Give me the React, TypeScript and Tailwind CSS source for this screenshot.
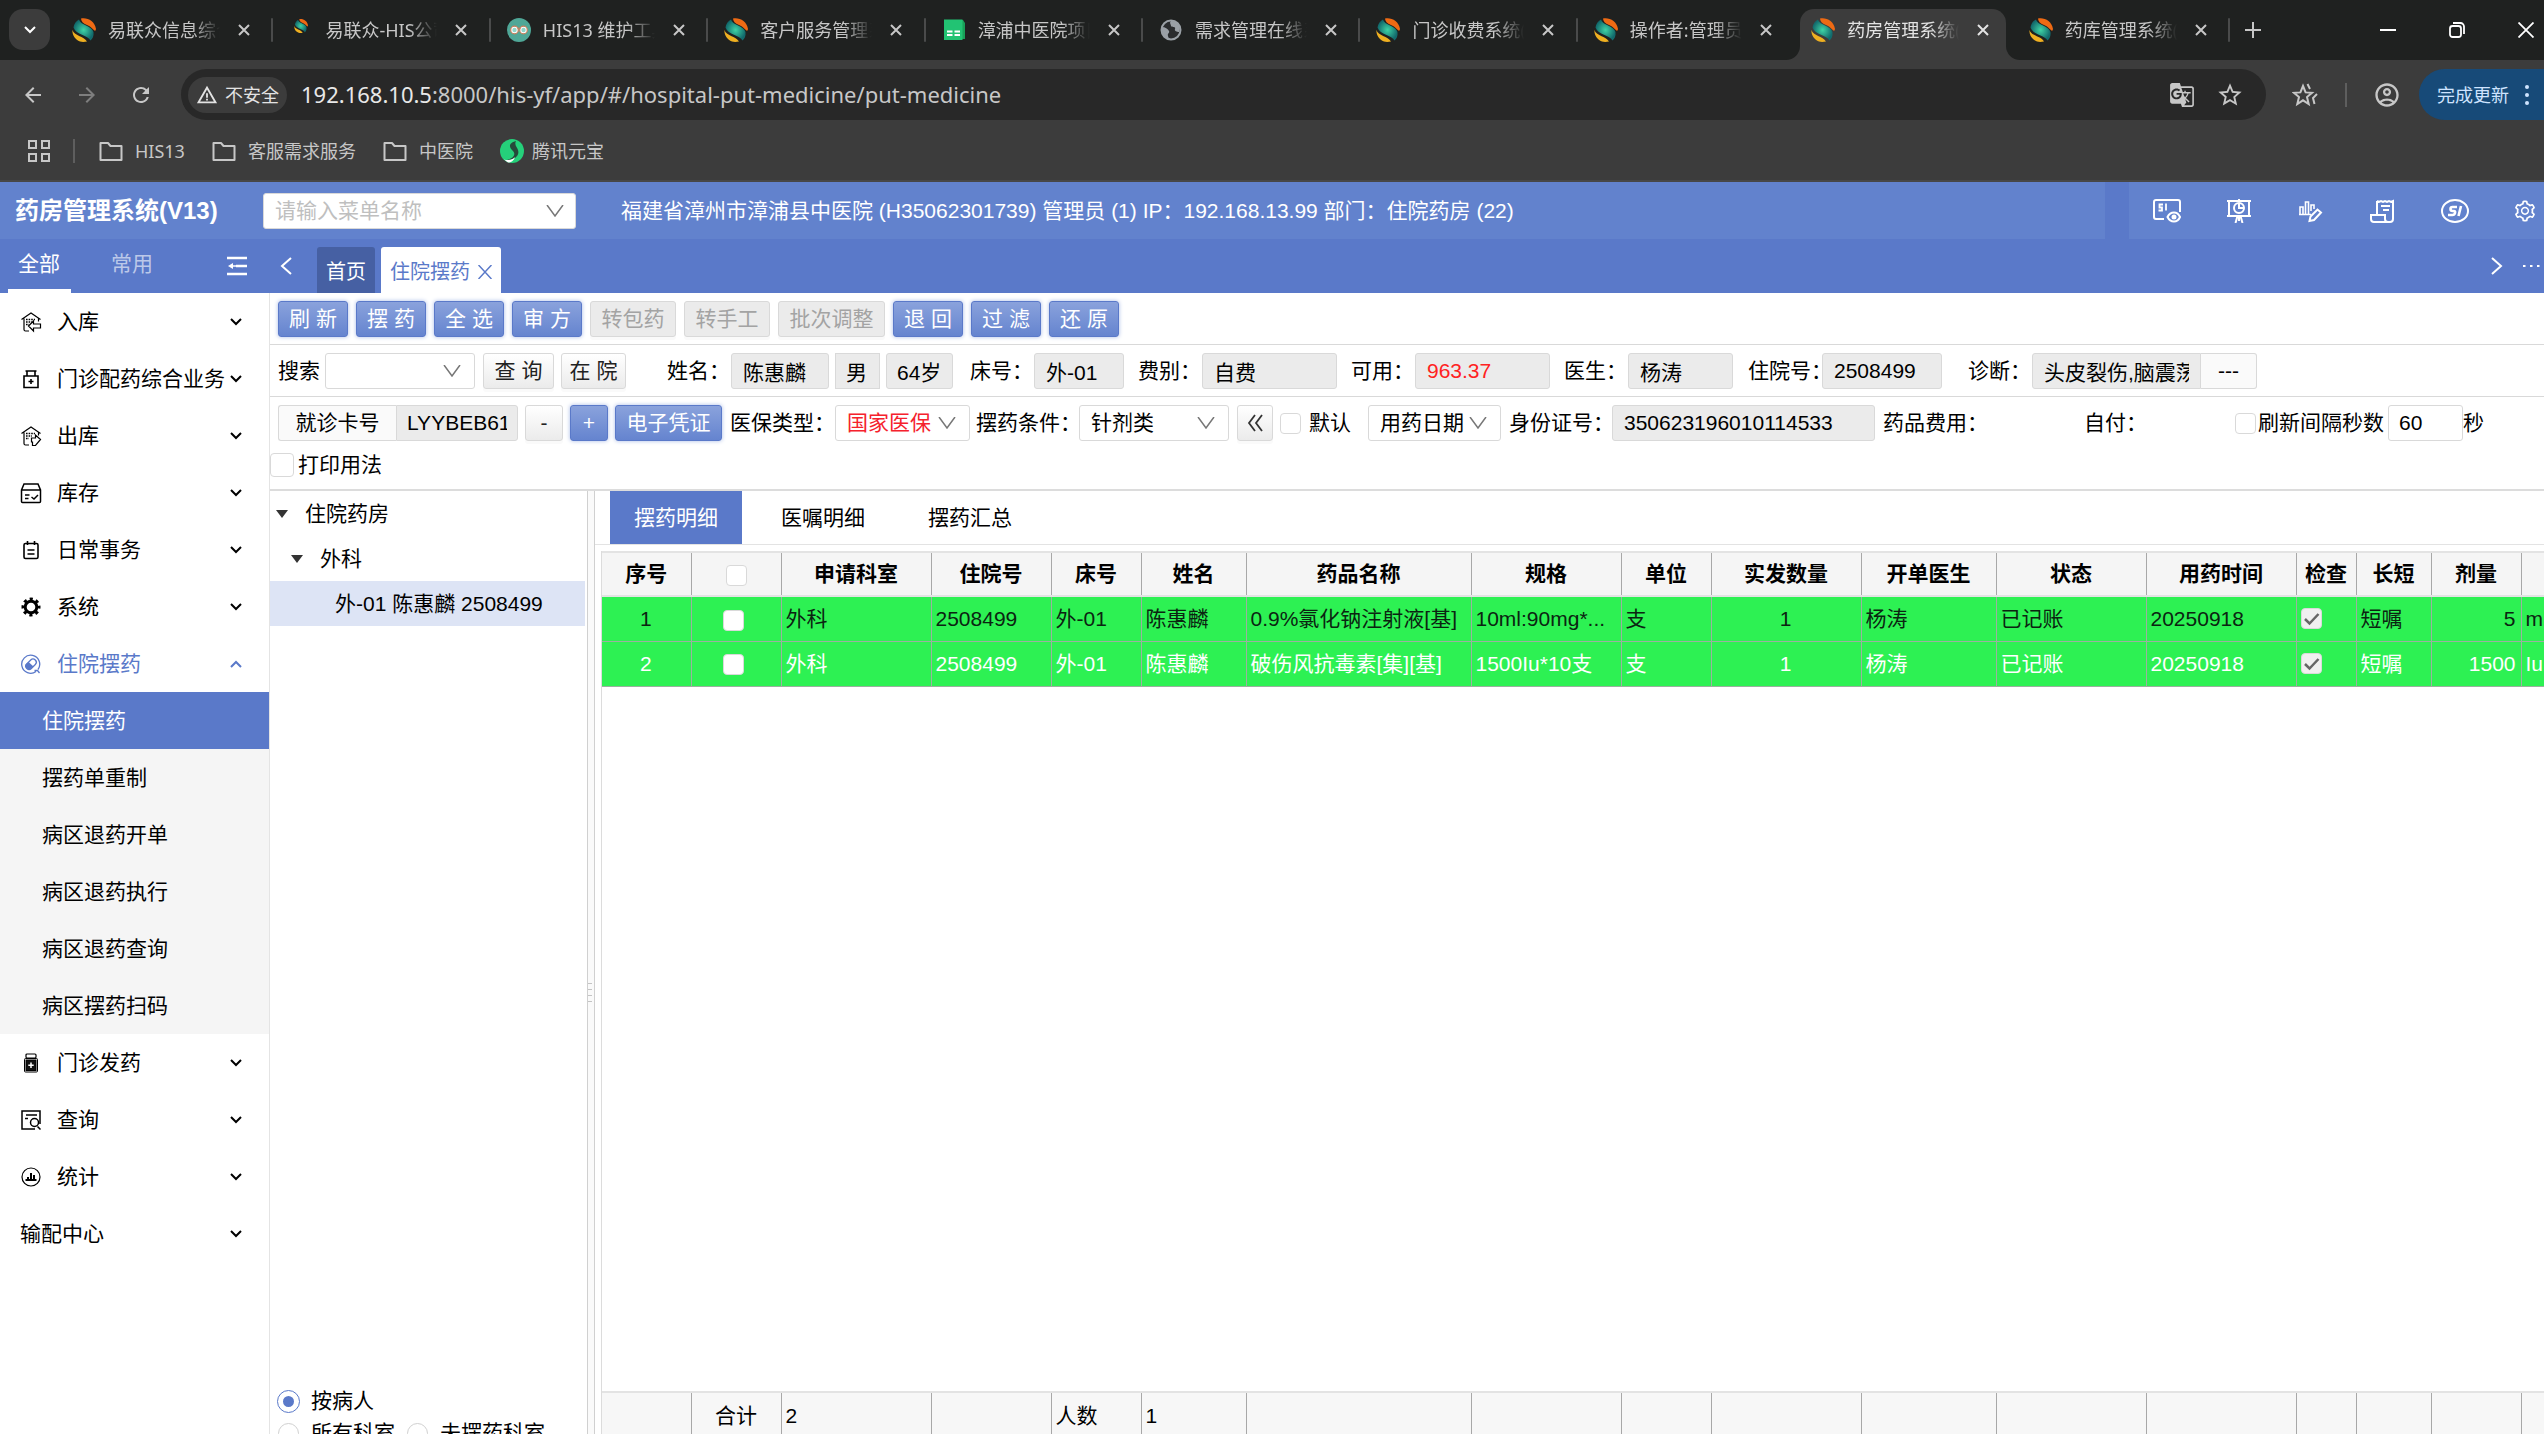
import { useState } from 'react';
import type { ReactNode } from 'react';
import { clsx } from 'clsx';
import { AiOutlineSetting } from 'react-icons/ai';
import {
  MdArrowBack,
  MdArrowForward,
  MdGTranslate,
  MdOutlineAccountCircle,
  MdRefresh,
  MdStarBorder,
  MdWarningAmber,
} from 'react-icons/md';

type IconProps = { className?: string };

/* ---------- 浏览器图标 ---------- */

const SwirlIcon = ({ className }: IconProps) => (
  <svg viewBox="0 0 24 24" className={clsx('shrink-0', className)}>
    <defs>
      <radialGradient id="teal">
        <stop offset="0" stopColor="#3fd3a5" />
        <stop offset="1" stopColor="#126a6c" />
      </radialGradient>
    </defs>
    <path d="M9 0.5C15-1 23 3 24 11C23 16 21 9 15 7C11 5.500 9 3 9 0.500Z" fill="#ee6a14" />
    <path d="M7 1.500C8 7 20 8 21.500 14C22 18 20.500 21 18.500 22.500C16 17 4 17 1.500 9.500C2 6 4 3 7 1.500Z" fill="url(#teal)" />
    <path d="M0.500 12C2 18 12 18 15 23.500C13 24 10 24.200 8 23.500C3 21.500 0 17 0.500 12Z" fill="#efb021" />
  </svg>
);

const GlassesIcon = () => (
  <svg viewBox="0 0 24 24" className="size-6 shrink-0">
    <circle cx="12" cy="12" r="12" fill="#4fa797" />
    <circle cx="7.500" cy="12" r="3.800" fill="#fff" stroke="#c77f5c" strokeWidth="1.200" />
    <circle cx="16.500" cy="12" r="3.800" fill="#fff" stroke="#c77f5c" strokeWidth="1.200" />
    <circle cx="7.500" cy="12" r="2.200" fill="#8fd6cb" />
    <circle cx="16.500" cy="12" r="2.200" fill="#8fd6cb" />
    <path d="M10.500 10.500Q12 9.500 13.500 10.500" stroke="#c77f5c" strokeWidth="1.200" fill="none" />
  </svg>
);

const SheetIcon = () => (
  <svg viewBox="0 0 24 24" className="size-6 shrink-0">
    <path d="M2 2h19l2 3v16H2Z" fill="#18a058" />
    <path d="M2 1.500h18.500V22H2Z" fill="#22c373" />
    <path d="M5 12.500h5.500v2H5zM12.500 12.500H18v2h-5.500zM5 16h5.500v2H5zM12.500 16H18v2h-5.500z" fill="#fff" />
  </svg>
);

const GlobeIcon = () => (
  <svg viewBox="0 0 24 24" className="size-6 shrink-0">
    <circle cx="12" cy="12" r="9.500" fill="#2a2c2e" stroke="#9aa0a6" strokeWidth="2" />
    <path d="M3 9C6 9 9 11 10 13C11 15 8 15 9 18C9 20 11 21 12 21C7 22 2 17 3 9ZM12 3C10 5 12 6 12 8C13 10 17 8 16 11C15 13 18 14 20 14C23 8 18 2 12 3Z" fill="#9aa0a6" />
  </svg>
);

const FolderIcon = () => (
  <svg viewBox="0 0 24 24" className="size-6" fill="none" stroke="#c7c7c7" strokeWidth="2" strokeLinejoin="round">
    <path d="M1.500 4h7.500l2.500 3H22.500v14H1.500Z" />
  </svg>
);

const CloseIcon = ({ className }: IconProps) => (
  <svg viewBox="0 0 12 12" className={clsx('size-3', className)} stroke="currentColor" strokeWidth="2" fill="none">
    <path d="M1 1l10 10M11 1L1 11" />
  </svg>
);

const Chevron = ({ className }: IconProps) => (
  <svg viewBox="0 0 12 8" className={clsx('h-2 w-3 shrink-0', className)} stroke="currentColor" strokeWidth="2" fill="none">
    <path d="M1 1l5 5l5-5" />
  </svg>
);

const StarListIcon = () => (
  <svg viewBox="0 0 26 24" className="h-6 w-[26px]" fill="none" stroke="#c7c7c7" strokeWidth="2">
    <path d="M11 3l2.600 6.400l6.400 0.400l-5 4.300l1.700 6.900L11 17.300L5.300 21L7 14.100L2 9.800l6.400-0.400Z" />
    <path d="M15.500 1l2.500 5M25 11l-4 4l1.500 6" />
  </svg>
);

/* ---------- 顶栏图标 ---------- */

const HeaderSvg = ({ children }: { children: ReactNode }) => (
  <svg viewBox="0 0 28 24" className="h-6 w-7" fill="none" stroke="#fff" strokeWidth="2">
    {children}
  </svg>
);

const headerIcons = [
  {
    name: '医保查看',
    icon: (
      <HeaderSvg>
        <path d="M11 20H3a2 2 0 0 1-2-2V3a2 2 0 0 1 2-2h22a2 2 0 0 1 2 2v10" />
        <path d="M10 5.500H6.500v3H9v3H5.500M13 4.500v7" strokeWidth="1.800" />
        <path d="M14.500 18c3-6 10-6 12.500 0c-2.500 6-9.500 6-12.500 0Z" />
        <circle cx="21" cy="18" r="1.500" fill="#fff" />
      </HeaderSvg>
    ),
  },
  {
    name: '看板',
    icon: (
      <HeaderSvg>
        <path d="M2 2h24M4 2v14M24 2v14M2 17h24M14 0v3M12.500 17L10.500 24M15.500 17l2 7M14 17v5" />
        <circle cx="14" cy="9" r="5" />
        <path d="M14 5v4h4" />
      </HeaderSvg>
    ),
  },
  {
    name: '报表',
    icon: (
      <HeaderSvg>
        <path d="M3 15V8h3v7M8.500 15V3h3v12M14 12V6h3v4M2 15.500h12" strokeWidth="1.600" />
        <path d="M12.500 22l1-4.500l7-7l3.500 3l-7 7.500Z" />
      </HeaderSvg>
    ),
  },
  {
    name: '单据',
    icon: (
      <HeaderSvg>
        <path d="M8 16V2M8 2l2 1l2-1l2 1l2-1l2 1l2-1l2 1l2-1v18a3 3 0 0 1-3 3H5a3 3 0 0 1-3-3v-4h14v4a3 3 0 0 0 3 3M12 7h9M14 11h6" />
      </HeaderSvg>
    ),
  },
  {
    name: '医保',
    icon: (
      <HeaderSvg>
        <ellipse cx="14" cy="12" rx="13" ry="11" />
        <path d="M16 8h-4.500q-2 0-2 2t2 2h1.500q1.500 0 1 2t-2.500 2H7M20 7l-2.500 10" strokeWidth="2.600" />
      </HeaderSvg>
    ),
  },
  { name: '设置', icon: <AiOutlineSetting className="size-6" /> },
];

/* ---------- 菜单图标 ---------- */

const MenuSvg = ({ children }: { children: ReactNode }) => (
  <svg viewBox="0 0 22 22" className="size-[22px] shrink-0" fill="none" stroke="currentColor" strokeWidth="1.500">
    {children}
  </svg>
);

const Warehouse = ({ arrow }: { arrow: string }) => (
  <MenuSvg>
    <path d="M1.500 8.500L11 2l9.500 6.500M4 7.500v11q0 1.500 1.500 1.500H9M18.500 7.500v3" strokeWidth="1.200" />
    <path d="M6 8.500h9M6 11h6M6 13.500h3" strokeWidth="1.500" strokeDasharray="1.600 1" />
    <path d={arrow} strokeWidth="1.200" />
  </MenuSvg>
);

const menuIcons: Record<string, ReactNode> = {
  in: <Warehouse arrow="M8.500 15l5-5v3h7v4h-7v3Z" />,
  out: <Warehouse arrow="M20.500 14.500l-5-4.500v3h-4v4h1v3.500h3Z" />,
  bottle: (
    <MenuSvg>
      <path d="M4 8h14v11.500H4ZM7 8V3.500M15 8V3.500M5.500 3h11M11 11v5M8.500 13.500h5" strokeWidth="1.600" />
    </MenuSvg>
  ),
  stock: (
    <MenuSvg>
      <path d="M1.500 8L4 2h14l2.500 6v11.500q0 1-1 1h-17q-1 0-1-1ZM1.500 8h19M5 13h4.500M5 16.500h3.500M11.500 15l2.500 2l4-4" />
    </MenuSvg>
  ),
  daily: (
    <MenuSvg>
      <rect x="4" y="4.500" width="14" height="15" rx="1.500" strokeWidth="1.600" />
      <path d="M7.500 2v4M14.500 2v4M7.500 11h7M7.500 15h7" strokeWidth="1.600" />
    </MenuSvg>
  ),
  gear: (
    <MenuSvg>
      <circle cx="11" cy="11" r="5.800" strokeWidth="3" />
      <circle cx="11" cy="11" r="8" strokeWidth="3" strokeDasharray="3.140 3.140" strokeDashoffset="1.570" />
    </MenuSvg>
  ),
  pill: (
    <MenuSvg>
      <path d="M16 18.500a9 9 0 1 1 2-2M14.500 17.500h3l2 2.500" strokeWidth="1.300" />
      <rect x="5" y="8" width="12" height="6.500" rx="3.200" transform="rotate(-45 11 11.200)" strokeWidth="1.300" />
      <path d="M8.500 9l5 4.500l-3 2.500q-3 1-4.500-1.500t0.500-4Z" fill="currentColor" strokeWidth="0" />
    </MenuSvg>
  ),
  bottleSolid: (
    <MenuSvg>
      <rect x="6" y="2" width="10" height="4" rx="1" strokeWidth="1.200" />
      <rect x="4.500" y="6.500" width="13" height="13.500" rx="1" strokeWidth="1" />
      <rect x="6" y="8" width="10" height="10.500" fill="#111" strokeWidth="1" />
      <path d="M11 10.500v5.500M8.300 13.200h5.400" stroke="#fff" />
    </MenuSvg>
  ),
  query: (
    <MenuSvg>
      <path d="M15 20H2V2h18v13M6 6h11M5 9.500h3M17.500 17.500l3 3" />
      <circle cx="14.500" cy="13.500" r="4" />
    </MenuSvg>
  ),
  stat: (
    <MenuSvg>
      <circle cx="11" cy="11" r="9" strokeWidth="1.200" />
      <path d="M5.500 14h11M8 14v-3M11 14V7M14 14V9" strokeWidth="2" />
    </MenuSvg>
  ),
};

/* ---------- 数据 ---------- */

const tabs: { title: string; icon: ReactNode; active?: boolean }[] = [
  { title: '易联众信息综合', icon: <SwirlIcon className="size-6" /> },
  { title: '易联众-HIS公司', icon: <SwirlIcon className="size-3.5 mx-[5px] mb-2" /> },
  { title: 'HIS13 维护工具', icon: <GlassesIcon /> },
  { title: '客户服务管理系', icon: <SwirlIcon className="size-6" /> },
  { title: '漳浦中医院项目', icon: <SheetIcon /> },
  { title: '需求管理在线系', icon: <GlobeIcon /> },
  { title: '门诊收费系统(', icon: <SwirlIcon className="size-6" /> },
  { title: '操作者:管理员', icon: <SwirlIcon className="size-6" /> },
  { title: '药房管理系统(', icon: <SwirlIcon className="size-6" />, active: true },
  { title: '药库管理系统(', icon: <SwirlIcon className="size-6" /> },
];

const menu: { label: string; icon?: string; children?: string[] }[] = [
  { label: '入库', icon: 'in' },
  { label: '门诊配药综合业务', icon: 'bottle' },
  { label: '出库', icon: 'out' },
  { label: '库存', icon: 'stock' },
  { label: '日常事务', icon: 'daily' },
  { label: '系统', icon: 'gear' },
  {
    label: '住院摆药',
    icon: 'pill',
    children: ['住院摆药', '摆药单重制', '病区退药开单', '病区退药执行', '病区退药查询', '病区摆药扫码'],
  },
  { label: '门诊发药', icon: 'bottleSolid' },
  { label: '查询', icon: 'query' },
  { label: '统计', icon: 'stat' },
  { label: '输配中心' },
];

const columns = [
  { title: '序号', width: 'w-[89px]' },
  { title: '', width: 'w-[90px]' },
  { title: '申请科室', width: 'w-[150px]' },
  { title: '住院号', width: 'w-[120px]' },
  { title: '床号', width: 'w-[90px]' },
  { title: '姓名', width: 'w-[105px]' },
  { title: '药品名称', width: 'w-[225px]' },
  { title: '规格', width: 'w-[150px]' },
  { title: '单位', width: 'w-[90px]' },
  { title: '实发数量', width: 'w-[150px]' },
  { title: '开单医生', width: 'w-[135px]' },
  { title: '状态', width: 'w-[150px]' },
  { title: '用药时间', width: 'w-[150px]' },
  { title: '检查', width: 'w-[60px]' },
  { title: '长短', width: 'w-[75px]' },
  { title: '剂量', width: 'w-[90px]' },
  { title: '', width: 'w-[150px]' },
];

const rows = [
  { no: 1, drug: '0.9%氯化钠注射液[基]', spec: '10ml:90mg*...', dose: '5', unit: 'ml', color: 'text-[#0b2411]' },
  { no: 2, drug: '破伤风抗毒素[集][基]', spec: '1500Iu*10支', dose: '1500', unit: 'Iu', color: 'text-white' },
];

/* ---------- 基础控件 ---------- */

const checkboxCls = 'size-[21px] shrink-0 appearance-none rounded border border-[#d9d9d9] bg-white';

type ButtonProps = { children: ReactNode; kind?: 'primary' | 'default' | 'disabled'; className?: string };

function Button({ children, kind = 'default', className }: ButtonProps) {
  return (
    <button
      type="button"
      disabled={kind === 'disabled'}
      className={clsx(
        'flex h-9 shrink-0 items-center justify-center whitespace-nowrap rounded-[3px] border',
        kind === 'primary' && 'border-[#5a79c9] bg-linear-to-b from-[#8aa2dc] to-[#6584cf] text-white shadow-[0_0_4px_#a9bbe6]',
        kind === 'default' && 'border-[#d9d9d9] bg-linear-to-b from-white to-[#ebebeb] text-[#222] shadow-[0_3px_0_#fafafa]',
        kind === 'disabled' && 'border-[#d9d9d9] bg-[#ebebeb] text-[#a3a3a3] shadow-[0_3px_0_#fafafa]',
        className
      )}
    >
      {children}
    </button>
  );
}

function Field({ label, value, labelCls, className }: { label: string; value: string; labelCls?: string; className?: string }) {
  return (
    <>
      <label htmlFor={label} className={clsx('shrink-0 whitespace-nowrap', labelCls)}>{label}：</label>
      <input
        id={label}
        readOnly
        defaultValue={value}
        className={clsx('h-9 shrink-0 rounded-[3px] border border-[#d9d9d9] bg-[#ebebeb] px-[11px]', className)}
      />
    </>
  );
}

type PickerProps = { id: string; value: string; className?: string; textCls?: string; arrowCls?: string };

function Picker({ id, value, className, textCls, arrowCls = 'right-4' }: PickerProps) {
  return (
    <span className={clsx('relative flex h-9 shrink-0', className)}>
      <select
        id={id}
        aria-label={id}
        className={clsx('h-full w-full appearance-none rounded-[3px] border border-[#d9d9d9] bg-white px-[11px]', textCls)}
      >
        <option>{value}</option>
      </select>
      <svg
        viewBox="0 0 18 12"
        className={clsx('pointer-events-none absolute top-3 h-3 w-[18px]', arrowCls)}
        fill="none"
        stroke="#777"
        strokeWidth="1.500"
      >
        <path d="M1 0l8 11l8-11" />
      </svg>
    </span>
  );
}

/* ---------- 页面区块 ---------- */

function BrowserChrome() {
  return (
    <div className="shrink-0 border-b-2 border-[#474747] bg-[#3c3c3c] font-['Noto_Sans','Noto_Sans_CJK_SC',sans-serif] text-lg text-[#c7c7c7]">
      {/* 标签栏 */}
      <div className="flex h-[60px] bg-[#1f2120]">
        <div className="w-14 shrink-0 pl-[9px] pt-[9px]">
          <button type="button" aria-label="搜索标签页" className="flex size-[41px] items-center justify-center rounded-[14px] bg-[#3c3c3c] text-white">
            <Chevron />
          </button>
        </div>
        <div className="flex min-w-0 flex-1">
          {tabs.map((tab, i) => {
            const noDivider = tab.active || tabs[i + 1]?.active;
            return (
              <div key={tab.title} className="flex min-w-0 flex-1 items-end">
                <div
                  className={clsx(
                    'relative mx-[5px] flex h-[51px] min-w-0 flex-1 items-center rounded-t-[14px] pb-[9px] pl-[11px]',
                    tab.active && 'bg-[#3c3c3c] text-[#e3e3e3]'
                  )}
                >
                  {tab.active && (
                    <>
                      <span className="absolute bottom-0 -left-3.5 size-3.5 overflow-hidden">
                        <span className="block size-full rounded-br-[14px] shadow-[5px_5px_0_5px_#3c3c3c]" />
                      </span>
                      <span className="absolute bottom-0 -right-3.5 size-3.5 overflow-hidden">
                        <span className="block size-full rounded-bl-[14px] shadow-[-5px_5px_0_5px_#3c3c3c]" />
                      </span>
                    </>
                  )}
                  {tab.icon}
                  <span className="ml-3 w-28 overflow-hidden whitespace-nowrap [mask-image:linear-gradient(to_right,black_75%,transparent)]">
                    {tab.title}
                  </span>
                  <button type="button" aria-label="关闭标签页" className="ml-[18px]">
                    <CloseIcon />
                  </button>
                </div>
                <span className={clsx('mb-[18px] h-6 w-0.5 shrink-0 rounded', noDivider ? 'bg-transparent' : 'bg-[#4a4b4b]')} />
              </div>
            );
          })}
        </div>
        <div className="flex w-[314px] shrink-0 items-center pl-[15px]">
          <button type="button" aria-label="新标签页">
            <svg viewBox="0 0 16 16" className="size-4" stroke="currentColor" strokeWidth="2">
              <path d="M8 0v16M0 8h16" />
            </svg>
          </button>
          <div className="ml-auto flex items-center gap-[53px] pr-2.5 text-white">
            <svg viewBox="0 0 16 16" className="size-4" stroke="currentColor" strokeWidth="2">
              <path d="M0 8h16" />
            </svg>
            <svg viewBox="0 0 16 16" className="size-4" stroke="currentColor" strokeWidth="1.800" fill="none">
              <rect x="1" y="4" width="11" height="11" rx="2.500" />
              <path d="M4 1h7.500a3.500 3.500 0 0 1 3.500 3.500V12" />
            </svg>
            <svg viewBox="0 0 16 16" className="size-4" stroke="currentColor" strokeWidth="1.800">
              <path d="M0.500 0.500l15 15M15.500 0.500l-15 15" />
            </svg>
          </div>
        </div>
      </div>

      {/* 地址栏 */}
      <div className="mt-[9px] flex h-[51px] items-center">
        <div className="flex w-[181px] shrink-0 items-center gap-[30px] pl-[21px]">
          <MdArrowBack className="size-6" />
          <MdArrowForward className="size-6 text-[#7e7e7e]" />
          <MdRefresh className="size-6" />
        </div>
        <div className="flex h-full min-w-0 flex-1 items-center rounded-full bg-[#282828] pl-[7px] pr-[22px]">
          <div className="flex h-9 shrink-0 items-center gap-[7px] rounded-full bg-[#3c3c3c] px-2 text-[#e3e3e3]">
            <MdWarningAmber className="size-[22px]" />
            不安全
          </div>
          <p className="ml-3.5 flex-1 truncate text-[22px]">
            <span className="text-[#e8e8e8]">192.168.10.5</span>:8000/his-yf/app/#/hospital-put-medicine/put-medicine
          </p>
          <MdGTranslate className="size-[26px] shrink-0" />
          <MdStarBorder className="ml-[21px] size-[28px] shrink-0" />
        </div>
        <div className="flex shrink-0 items-center pl-[26px]">
          <StarListIcon />
          <span className="ml-[27px] h-6 w-0.5 bg-[#5e5e5e]" />
          <MdOutlineAccountCircle className="ml-[26px] size-7" />
        </div>
        <button type="button" className="ml-[18px] flex h-full w-[125px] shrink-0 items-center gap-4 overflow-hidden rounded-l-full bg-[#174a78] pl-[18px] text-[#cfe4ff]">
          完成更新
          <svg viewBox="0 0 4 22" className="h-[22px] w-1 shrink-0" fill="currentColor">
            <circle cx="2" cy="3" r="2" />
            <circle cx="2" cy="11" r="2" />
            <circle cx="2" cy="19" r="2" />
          </svg>
        </button>
      </div>

      {/* 书签栏 */}
      <div className="flex h-[60px] items-center pt-0.5 pl-7">
        <svg viewBox="0 0 22 22" className="size-[22px]" fill="none" stroke="currentColor" strokeWidth="2">
          <path d="M1 1h7v7H1zM14 1h7v7h-7zM1 14h7v7H1zM14 14h7v7h-7z" />
        </svg>
        <span className="ml-[23px] h-6 w-0.5 bg-[#5e5e5e]" />
        <div className="ml-6 flex items-center gap-[27px]">
          {['HIS13', '客服需求服务', '中医院'].map(name => (
            <a key={name} href="#" className="flex items-center gap-3">
              <FolderIcon />
              {name}
            </a>
          ))}
          <a href="#" className="flex items-center gap-2">
            <svg viewBox="0 0 24 24" className="size-6">
              <circle cx="12" cy="12" r="12" fill="#25d07a" />
              <path d="M16 2C8 4 9 9 13 12C16 15 14 19 7 21C14 21 20 17 18 11C17 8 14 6 16 2Z" fill="#26483a" />
              <path d="M4 20.500C9 22 14 20 15 18C14 22 10 24 8 23.500Z" fill="#fff" />
            </svg>
            腾讯元宝
          </a>
        </div>
      </div>
    </div>
  );
}

function AppHeader() {
  return (
    <header className="flex h-[57px] shrink-0 bg-[#5a79c9] text-white">
      <div className="flex min-w-0 flex-1 items-center bg-[#6282cd]">
        <h1 className="w-[263px] shrink-0 pl-[15px] text-2xl font-bold">药房管理系统(V13)</h1>
        <Picker id="菜单名称" value="请输入菜单名称" className="w-[313px]" textCls="text-[#bfbfbf]" arrowCls="right-3" />
        <p className="ml-[45px] whitespace-pre">福建省漳州市漳浦县中医院 (H35062301739) 管理员 (1) IP：192.168.13.99 部门：住院药房 (22)</p>
      </div>
      <div className="ml-6 flex shrink-0 items-center gap-11 bg-[#6282cd] pl-6 pr-[7px]">
        {headerIcons.map(item => (
          <button key={item.name} type="button" aria-label={item.name}>{item.icon}</button>
        ))}
      </div>
    </header>
  );
}

function NavBar() {
  return (
    <nav className="flex h-[54px] shrink-0 bg-[#5a79c9] text-white">
      <div className="flex w-[270px] shrink-0 pl-2">
        <button type="button" className="h-full w-[63px] border-b-4 border-white pr-[31px] pl-2.5 whitespace-nowrap">全部</button>
        <button type="button" className="ml-10 h-full border-b-4 border-transparent text-white/60">常用</button>
        <button type="button" aria-label="收起菜单" className="mr-[23px] ml-auto">
          <svg viewBox="0 0 20 20" className="size-5" fill="none" stroke="#fff" strokeWidth="2.500">
            <path d="M0 2h20M9 10h11M0 18h20" />
            <path d="M6 7L1 10l5 3Z" fill="#fff" strokeWidth="0" />
            <path d="M5 10h4" strokeWidth="1.500" />
          </svg>
        </button>
      </div>
      <button type="button" aria-label="向左" className="ml-2.5">
        <svg viewBox="0 0 12 18" className="h-[18px] w-3" fill="none" stroke="#fff" strokeWidth="2">
          <path d="M11 1L2 9l9 8" />
        </svg>
      </button>
      <div className="ml-[25px] flex items-end gap-1.5 text-[20px]">
        <a href="#" className="flex h-[46px] items-center rounded-t-[3px] bg-[#4660a3] px-[9px] pt-1">首页</a>
        <a href="#" className="flex h-[46px] items-center gap-2 rounded-t-[3px] bg-white px-[9px] pt-1 text-[#5a79c9]">
          住院摆药
          <svg viewBox="0 0 14 14" className="size-3.5" stroke="currentColor" strokeWidth="1.500">
            <path d="M0.500 0l13 14M13.500 0l-13 14" />
          </svg>
        </a>
      </div>
      <div className="ml-auto flex items-center gap-5 pr-1">
        <svg viewBox="0 0 12 18" className="h-[18px] w-3" fill="none" stroke="#fff" strokeWidth="2">
          <path d="M1 1l9 8l-9 8" />
        </svg>
        <svg viewBox="0 0 17 4" className="h-1 w-[17px]" fill="#fff">
          <path d="M0 1h2.500v2H0zM7 1h2.500v2H7zM14 1h2.500v2H14z" />
        </svg>
      </div>
    </nav>
  );
}

function Sidebar() {
  const [open, setOpen] = useState<string>('住院摆药');

  return (
    <aside className="w-[270px] shrink-0 border-r border-[#e4e4e4] bg-white text-black">
      {menu.map(item => {
        const expanded = item.label === open && item.children;
        return (
          <div key={item.label}>
            <button
              type="button"
              onClick={() => setOpen(item.label)}
              className={clsx('flex h-[57px] w-full items-center pr-[27px] pl-5 whitespace-nowrap', expanded && 'text-[#5a79c9]')}
            >
              {item.icon && <span className="mr-[15px]">{menuIcons[item.icon]}</span>}
              {item.label}
              <Chevron className={clsx('ml-auto', expanded && 'rotate-180')} />
            </button>
            {expanded && (
              <ul className="bg-[#f5f5f5]">
                {item.children?.map((child, i) => (
                  <li key={child} className={clsx('h-[57px]', i === 0 && 'bg-[#5a79c9] text-white')}>
                    <a href="#" className="flex h-full items-center pl-[42px]">{child}</a>
                  </li>
                ))}
              </ul>
            )}
          </div>
        );
      })}
    </aside>
  );
}

function Toolbar() {
  return (
    <div className="shrink-0 border-b-2 border-[#dcdcdc]">
      <div className="flex h-[52px] items-center gap-2 border-b border-[#d9d9d9] px-2">
        {['刷 新', '摆 药', '全 选', '审 方'].map(t => (
          <Button key={t} kind="primary" className="w-[70px]">{t}</Button>
        ))}
        <Button kind="disabled" className="w-[86px]">转包药</Button>
        <Button kind="disabled" className="w-[86px]">转手工</Button>
        <Button kind="disabled" className="w-[107px]">批次调整</Button>
        {['退 回', '过 滤', '还 原'].map(t => (
          <Button key={t} kind="primary" className="w-[70px]">{t}</Button>
        ))}
      </div>

      {/* 患者信息 */}
      <div className="flex h-[52px] items-center border-b border-[#d9d9d9] px-2">
        <label htmlFor="搜索" className="mr-[5px] shrink-0">搜索</label>
        <Picker id="搜索" value="" className="w-[150px]" arrowCls="right-3.5" />
        <Button className="ml-2 w-[71px]">查 询</Button>
        <Button className="ml-[7px] w-[65px]">在 院</Button>
        <Field label="姓名" value="陈惠麟" labelCls="ml-[41px] w-16" className="w-[98px]" />
        <input aria-label="性别" readOnly defaultValue="男" className="ml-1.5 h-9 w-[45px] shrink-0 border border-[#d9d9d9] bg-[#ebebeb] px-2.5" />
        <input aria-label="年龄" readOnly defaultValue="64岁" className="ml-1.5 h-9 w-[67px] shrink-0 rounded-[3px] border border-[#d9d9d9] bg-[#ebebeb] px-2.5" />
        <Field label="床号" value="外-01" labelCls="ml-[17px] w-16" className="w-[90px]" />
        <Field label="费别" value="自费" labelCls="ml-3.5 w-16" className="w-[135px]" />
        <Field label="可用" value="963.37" labelCls="ml-3.5 w-16" className="w-[135px] text-[#ff2222]" />
        <Field label="医生" value="杨涛" labelCls="ml-3.5 w-16" className="w-[105px]" />
        <Field label="住院号" value="2508499" labelCls="ml-[15px] w-[74px]" className="w-[120px]" />
        <Field label="诊断" value="头皮裂伤,脑震荡" labelCls="ml-[26px] w-16" className="w-[169px] rounded-r-none" />
        <button type="button" className="h-9 w-14 shrink-0 rounded-r-[3px] border border-l-0 border-[#d9d9d9] bg-[#fafafa]">---</button>
      </div>

      {/* 卡号与筛选 */}
      <div className="flex h-[52px] items-center px-2">
        <label htmlFor="就诊卡号" className="flex h-9 w-[118px] shrink-0 items-center justify-center rounded-l-[3px] border border-r-0 border-[#d9d9d9] bg-[#fafafa]">
          就诊卡号
        </label>
        <input id="就诊卡号" readOnly defaultValue="LYYBEB61" className="h-9 w-[122px] shrink-0 rounded-r-[3px] border border-[#d9d9d9] bg-[#ebebeb] px-2.5" />
        <Button className="ml-[7px] w-[38px]">-</Button>
        <Button kind="primary" className="ml-[7px] w-[38px]">+</Button>
        <Button kind="primary" className="ml-[7px] w-[107px]">电子凭证</Button>
        <label htmlFor="医保类型" className="ml-2 w-[105px] shrink-0 whitespace-nowrap">医保类型：</label>
        <Picker id="医保类型" value="国家医保" className="w-[135px]" textCls="text-[#f5222d]" arrowCls="right-3.5" />
        <label htmlFor="摆药条件" className="ml-1.5 w-[103px] shrink-0 whitespace-nowrap">摆药条件：</label>
        <Picker id="摆药条件" value="针剂类" className="w-[150px]" arrowCls="right-3.5" />
        <Button className="ml-2 w-9">
          <svg viewBox="0 0 16 18" className="h-[18px] w-4" fill="none" stroke="#333" strokeWidth="1.800">
            <path d="M8 1L2 9l6 8M15 1L9 9l6 8" />
          </svg>
        </Button>
        <label className="ml-[7px] flex shrink-0 items-center gap-2">
          <input type="checkbox" className={checkboxCls} />
          默认
        </label>
        <Picker id="用药日期" value="用药日期" className="ml-[17px] w-[133px]" arrowCls="right-3.5" />
        <Field label="身份证号" value="350623196010114533" labelCls="ml-2 w-[103px]" className="w-[263px]" />
        <span className="ml-2 shrink-0">药品费用：</span>
        <span className="ml-24 shrink-0">自付：</span>
        <label className="ml-[88px] flex shrink-0 items-center gap-0.5">
          <input type="checkbox" className={checkboxCls} />
          刷新间隔秒数
        </label>
        <input aria-label="刷新间隔秒数" defaultValue="60" className="ml-1 h-9 w-[75px] shrink-0 rounded-[3px] border border-[#d9d9d9] bg-white px-2.5" />
        <span>秒</span>
      </div>
      <label className="flex h-10 items-center gap-1 pb-2">
        <input type="checkbox" className="size-6 appearance-none rounded border border-[#d9d9d9] bg-white" />
        打印用法
      </label>
    </div>
  );
}

function Triangle() {
  return (
    <svg viewBox="0 0 12 8" className="h-2 w-3 shrink-0" fill="#333">
      <path d="M0 0h12L6 8Z" />
    </svg>
  );
}

function Radio({ label, checked }: { label: string; checked?: boolean }) {
  return (
    <label className="flex items-center gap-3">
      <input
        type="radio"
        name="scope"
        defaultChecked={checked}
        className="size-[21px] appearance-none rounded-full border border-[#d0d0d0] bg-white checked:border-[5px] checked:border-white checked:bg-[#5a79c9] checked:outline checked:outline-[#5a79c9]"
      />
      {label}
    </label>
  );
}

function PatientTree() {
  return (
    <div className="flex w-[317px] shrink-0 flex-col justify-between pr-0.5">
      <ul>
        <li className="flex h-[45px] items-center gap-[17px] pl-1.5"><Triangle />住院药房</li>
        <li className="flex h-[45px] items-center gap-[17px] pl-[21px]"><Triangle />外科</li>
        <li className="flex h-[45px] items-center bg-[#dde4f5] pl-[65px]">外-01 陈惠麟 2508499</li>
      </ul>
      <div className="-mb-3.5 space-y-0.5 pl-2">
        <Radio label="按病人" checked />
        <div className="flex gap-3">
          <Radio label="所有科室" />
          <Radio label="未摆药科室" />
        </div>
      </div>
    </div>
  );
}

function DetailTable() {
  return (
    <table className="h-full w-[2069px] table-fixed border-collapse">
      <colgroup>
        {columns.map((col, i) => <col key={i} className={col.width} />)}
      </colgroup>
      <thead>
        <tr className="border-y-2 border-[#e3e3e3] bg-[#f5f5f5]">
          {columns.map((col, i) => (
            <th key={i} className="h-11 border-r border-[#a8a8a8] p-0 font-bold">
              {i === 1 ? <input type="checkbox" aria-label="全选" className={clsx(checkboxCls, 'align-middle')} /> : col.title}
            </th>
          ))}
        </tr>
      </thead>
      <tbody>
        {rows.map(row => (
          <tr
            key={row.no}
            className={clsx('border-b border-[#9bb09f] bg-[#2df153] *:h-[45px] *:truncate *:border-r *:border-[#9bb09f] *:pl-1 *:pr-[5px]', row.color)}
          >
            <td className="text-center">{row.no}</td>
            <td className="text-center">
              <input type="checkbox" aria-label={`选择${row.no}`} className={clsx(checkboxCls, 'mr-1 align-middle')} />
            </td>
            <td>外科</td>
            <td>2508499</td>
            <td>外-01</td>
            <td>陈惠麟</td>
            <td>{row.drug}</td>
            <td>{row.spec}</td>
            <td>支</td>
            <td className="text-center">1</td>
            <td>杨涛</td>
            <td>已记账</td>
            <td>20250918</td>
            <td>
              <span className="grid w-[21px]">
                <input
                  type="checkbox"
                  aria-label={`检查${row.no}`}
                  defaultChecked
                  disabled
                  className="col-start-1 row-start-1 size-[21px] appearance-none rounded border border-[#d9d9d9] bg-[#f0f0f0]"
                />
                <svg viewBox="0 0 21 21" className="col-start-1 row-start-1 size-[21px]" fill="none" stroke="#666" strokeWidth="2.500">
                  <path d="M4 11l4.500 4.500L17.500 6" />
                </svg>
              </span>
            </td>
            <td>短嘱</td>
            <td className="text-right">{row.dose}</td>
            <td>{row.unit}</td>
          </tr>
        ))}
        <tr>
          <td colSpan={columns.length} />
        </tr>
      </tbody>
      <tfoot>
        <tr className="border-t-2 border-[#e3e3e3] bg-[#f7f7f7] *:h-[42px] *:border-r *:border-[#a8a8a8] *:px-1 *:pt-1">
          {columns.map((_, i) => (
            <td key={i} className={clsx(i === 1 && 'text-center')}>
              {i === 1 && '合计'}
              {i === 2 && '2'}
              {i === 4 && '人数'}
              {i === 5 && '1'}
            </td>
          ))}
        </tr>
      </tfoot>
    </table>
  );
}

export default function App() {
  const [tab, setTab] = useState<string>('摆药明细');

  return (
    <div className="flex h-screen flex-col overflow-hidden bg-white font-['Liberation_Sans','Noto_Sans_CJK_SC',sans-serif] text-[21px] leading-[30px] text-black">
      <BrowserChrome />
      <AppHeader />
      <NavBar />
      <div className="flex min-h-0 flex-1">
        <Sidebar />
        <main className="flex min-w-0 flex-1 flex-col overflow-hidden">
          <Toolbar />
          <div className="flex min-h-0 flex-1">
            <PatientTree />
            {/* 分隔条 */}
            <div className="flex w-2 shrink-0 items-center border-x border-[#d0d0d0] bg-[#fafafa] pt-[60px]">
              <div className="h-5 w-1 bg-[repeating-linear-gradient(#c4c4c4_0_1px,transparent_1px_6px)]" />
            </div>
            <section className="flex min-w-0 flex-1 flex-col">
              <div className="flex h-[54px] shrink-0 gap-[15px] border-b border-[#e3e3e3] pl-[15px]">
                {['摆药明细', '医嘱明细', '摆药汇总'].map(name => (
                  <button
                    key={name}
                    type="button"
                    onClick={() => setTab(name)}
                    className={clsx('w-[132px]', tab === name && 'bg-[#5a79c9] text-white')}
                  >
                    {name}
                  </button>
                ))}
              </div>
              <div className="mt-1.5 ml-1.5 min-h-0 flex-1 overflow-hidden border-l border-[#dcdcdc]">
                <DetailTable />
              </div>
            </section>
          </div>
        </main>
      </div>
    </div>
  );
}
